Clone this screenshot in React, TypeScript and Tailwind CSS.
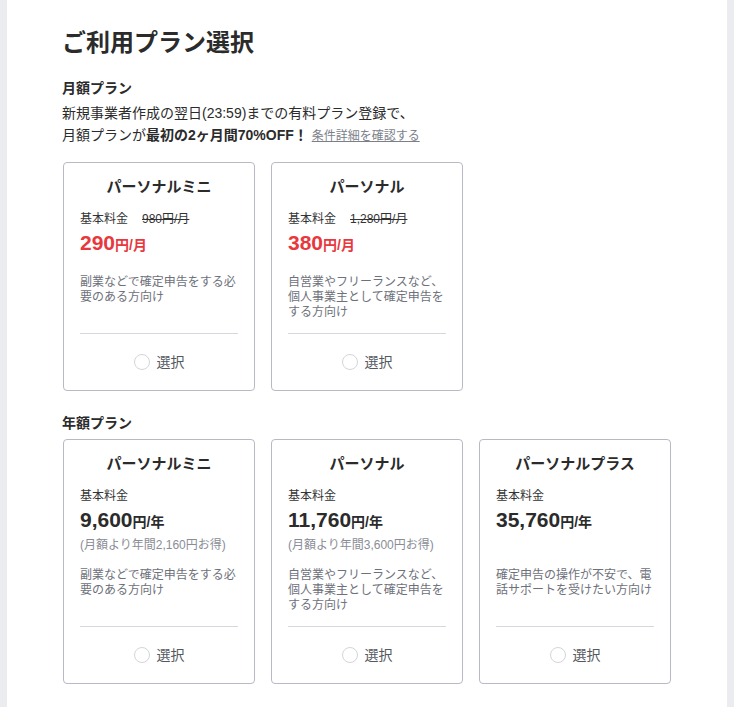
import { Fragment } from 'react'

type Plan = {
	name: string
	oldPrice?: string
	price: string
	unit: string
	saving?: string
	desc: string
	red?: boolean
}

const monthlyPlans: Plan[] = [
	{
		name: 'パーソナルミニ',
		oldPrice: '980円/月',
		price: '290',
		unit: '円/月',
		desc: '副業などで確定申告をする必要のある方向け',
		red: true,
	},
	{
		name: 'パーソナル',
		oldPrice: '1,280円/月',
		price: '380',
		unit: '円/月',
		desc: '自営業やフリーランスなど、個人事業主として確定申告をする方向け',
		red: true,
	},
]

const yearlyPlans: Plan[] = [
	{
		name: 'パーソナルミニ',
		price: '9,600',
		unit: '円/年',
		saving: '(月額より年間2,160円お得)',
		desc: '副業などで確定申告をする必要のある方向け',
	},
	{
		name: 'パーソナル',
		price: '11,760',
		unit: '円/年',
		saving: '(月額より年間3,600円お得)',
		desc: '自営業やフリーランスなど、個人事業主として確定申告をする方向け',
	},
	{
		name: 'パーソナルプラス',
		price: '35,760',
		unit: '円/年',
		saving: '',
		desc: '確定申告の操作が不安で、電話サポートを受けたい方向け',
	},
]

const PlanCard = ({ plan, yearly }: { plan: Plan; yearly?: boolean }) => {
	return (
		<div className="w-[192px] flex flex-col border border-[#b7bac5] rounded-[4px] bg-white">
			<div className="px-4 pt-[13px]">
				<div className="text-[15px] leading-[22px] font-bold text-center text-[#2b2b2b]">{plan.name}</div>
				<div className="mt-3 text-[12px] leading-[18px] text-[#333] flex gap-[14px]">
					<span>基本料金</span>
					{plan.oldPrice && <span className="line-through">{plan.oldPrice}</span>}
				</div>
				<div className={`h-[30px] flex items-baseline font-bold ${plan.red ? 'text-[#e8383d]' : 'text-[#2b2b2b]'}`}>
					<span className="text-[21px] leading-[30px]">{plan.price}</span>
					<span className="text-[14px]">{plan.unit}</span>
				</div>
				{yearly && (
					<div className="h-4 text-[12px] leading-[20px] text-[#8a8d96]">{plan.saving}</div>
				)}
				<div className="mt-[17px] min-h-[45px] text-[12px] leading-[15px] text-[#6e717b]">{plan.desc}</div>
				<div className="mt-[13px] h-px bg-[#d6d8de]" />
			</div>
			<div className="h-[56px] flex items-center justify-center gap-[7px]">
				<span className="w-4 h-4 rounded-full border border-[#d3d5dc] bg-white" />
				<span className="text-[14px] text-[#555862]">選択</span>
			</div>
		</div>
	)
}

const App = () => {
	return (
		<div
			className="min-h-[707px] bg-[#ebecf0] px-[7px]"
			style={{ fontFamily: '"Liberation Sans", "Noto Sans CJK JP", sans-serif' }}
		>
			<div className="bg-white min-h-[707px] pl-[55px] pt-[27px] pb-6 text-[#2b2b2b]">
				<h1 className="text-[24px] leading-[32px] font-bold">ご利用プラン選択</h1>
				<h2 className="mt-[19px] text-[14px] leading-[21px] font-bold">月額プラン</h2>
				<p className="mt-[3px] text-[14px] leading-[22px]">
					新規事業者作成の翌日(23:59)までの有料プラン登録で、
					<br />
					月額プランが<b>最初の2ヶ月間70%OFF！</b>{' '}
					<span className="text-[12px] text-[#7b7f8a] underline">条件詳細を確認する</span>
				</p>
				<div className="mt-[15px] ml-px flex gap-4">
					{monthlyPlans.map((p, i) => (
						<Fragment key={i}>
							<PlanCard plan={p} />
						</Fragment>
					))}
				</div>
				<h2 className="mt-[22px] text-[14px] leading-[21px] font-bold">年額プラン</h2>
				<div className="mt-[5px] ml-px flex gap-4">
					{yearlyPlans.map((p, i) => (
						<PlanCard key={i} plan={p} yearly />
					))}
				</div>
			</div>
		</div>
	)
}

export default App
